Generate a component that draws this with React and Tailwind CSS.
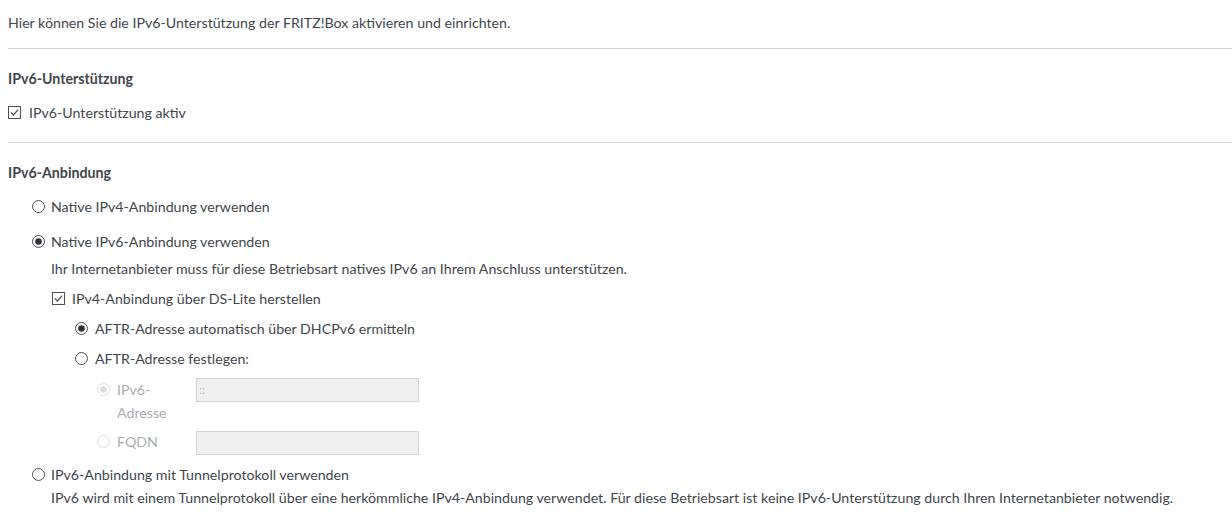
function Check({ className = "" }) {
  return (
    <svg width="13" height="13" viewBox="0 0 13 13" className={className}>
      <rect x="0.5" y="0.5" width="12" height="12" fill="white" stroke="#4a4f54" strokeWidth="1" />
      <path d="M2.8 6.4 L5.3 9 L10.2 3.6" fill="none" stroke="#4a4f54" strokeWidth="1.2" />
    </svg>
  );
}

function Radio({ checked = false, disabled = false, className = "" }) {
  const ring = disabled ? "#dcdcdc" : "#4a4f54";
  const dot = disabled ? "#dcdcdc" : "#2f3438";
  return (
    <svg width="13" height="13" viewBox="0 0 13 13" className={className}>
      <circle cx="6.5" cy="6.5" r="6" fill="white" stroke={ring} strokeWidth="1" />
      {checked && <circle cx="6.5" cy="6.5" r="3.3" fill={dot} />}
    </svg>
  );
}

function Row({ icon, children, className = "" }) {
  return (
    <div className={"flex items-center leading-[23px] " + className}>
      {icon}
      <span>{children}</span>
    </div>
  );
}

export default function App() {
  return (
    <div
      className="w-[1232px] h-[517px] bg-white text-[#3f464c] text-[14.2px] overflow-hidden"
      style={{ fontFamily: "Lato, 'Liberation Sans', sans-serif" }}
    >
      <div className="pl-2 pt-[11px] leading-[23px]">
        Hier können Sie die IPv6-Unterstützung der FRITZ!Box aktivieren und einrichten.
      </div>
      <div className="ml-2 mt-[14px] border-t border-[#d6d6d6]" />

      <div className="pl-2 mt-[18px] leading-[23px] font-bold">IPv6-Unterstützung</div>
      <Row className="pl-2 mt-[11px]" icon={<Check className="mr-[8px]" />}>
        IPv6-Unterstützung aktiv
      </Row>
      <div className="ml-2 mt-[18px] border-t border-[#d6d6d6]" />

      <div className="pl-2 mt-[18px] leading-[23px] font-bold">IPv6-Anbindung</div>

      <div className="pl-[32px]">
        <Row className="mt-[11px]" icon={<Radio className="mr-[6px]" />}>
          Native IPv4-Anbindung verwenden
        </Row>
        <Row className="mt-[12px]" icon={<Radio checked className="mr-[6px]" />}>
          Native IPv6-Anbindung verwenden
        </Row>
        <div className="pl-[19px] mt-[4px] leading-[23px]">
          Ihr Internetanbieter muss für diese Betriebsart natives IPv6 an Ihrem Anschluss unterstützen.
        </div>

        <div className="pl-[20px]">
          <Row className="mt-[7px]" icon={<Check className="mr-[7px]" />}>
            IPv4-Anbindung über DS-Lite herstellen
          </Row>
          <div className="pl-[23px]">
            <Row className="mt-[7px]" icon={<Radio checked className="mr-[7px]" />}>
              AFTR-Adresse automatisch über DHCPv6 ermitteln
            </Row>
            <Row className="mt-[7px]" icon={<Radio className="mr-[7px]" />}>
              AFTR-Adresse festlegen:
            </Row>

            <div className="pl-[22px] text-[#a9adb0]">
              <div className="mt-[8px] flex items-start leading-[23px]">
                <div className="flex items-start w-[99px]">
                  <Radio checked disabled className="mr-[7px] mt-[5px] shrink-0" />
                  <span className="w-[60px]">IPv6-Adresse</span>
                </div>
                <div className="w-[223px] h-[24px] bg-[#f0f0f0] border border-[#d4d4d4] pl-[2px] text-[12px] leading-[22px] text-[#b5b8ba]">
                  ::
                </div>
              </div>
              <div className="mt-[6px] flex items-start leading-[23px]">
                <div className="flex items-center w-[99px]">
                  <Radio disabled className="mr-[7px] shrink-0" />
                  <span>FQDN</span>
                </div>
                <div className="w-[223px] h-[24px] mt-[1px] bg-[#f0f0f0] border border-[#d4d4d4]" />
              </div>
            </div>
          </div>
        </div>

        <Row className="mt-[8px]" icon={<Radio className="mr-[6px]" />}>
          IPv6-Anbindung mit Tunnelprotokoll verwenden
        </Row>
        <div className="pl-[19px] leading-[23px]">
          IPv6 wird mit einem Tunnelprotokoll über eine herkömmliche IPv4-Anbindung verwendet. Für diese Betriebsart ist keine IPv6-Unterstützung durch Ihren Internetanbieter notwendig.
        </div>
      </div>
    </div>
  );
}
